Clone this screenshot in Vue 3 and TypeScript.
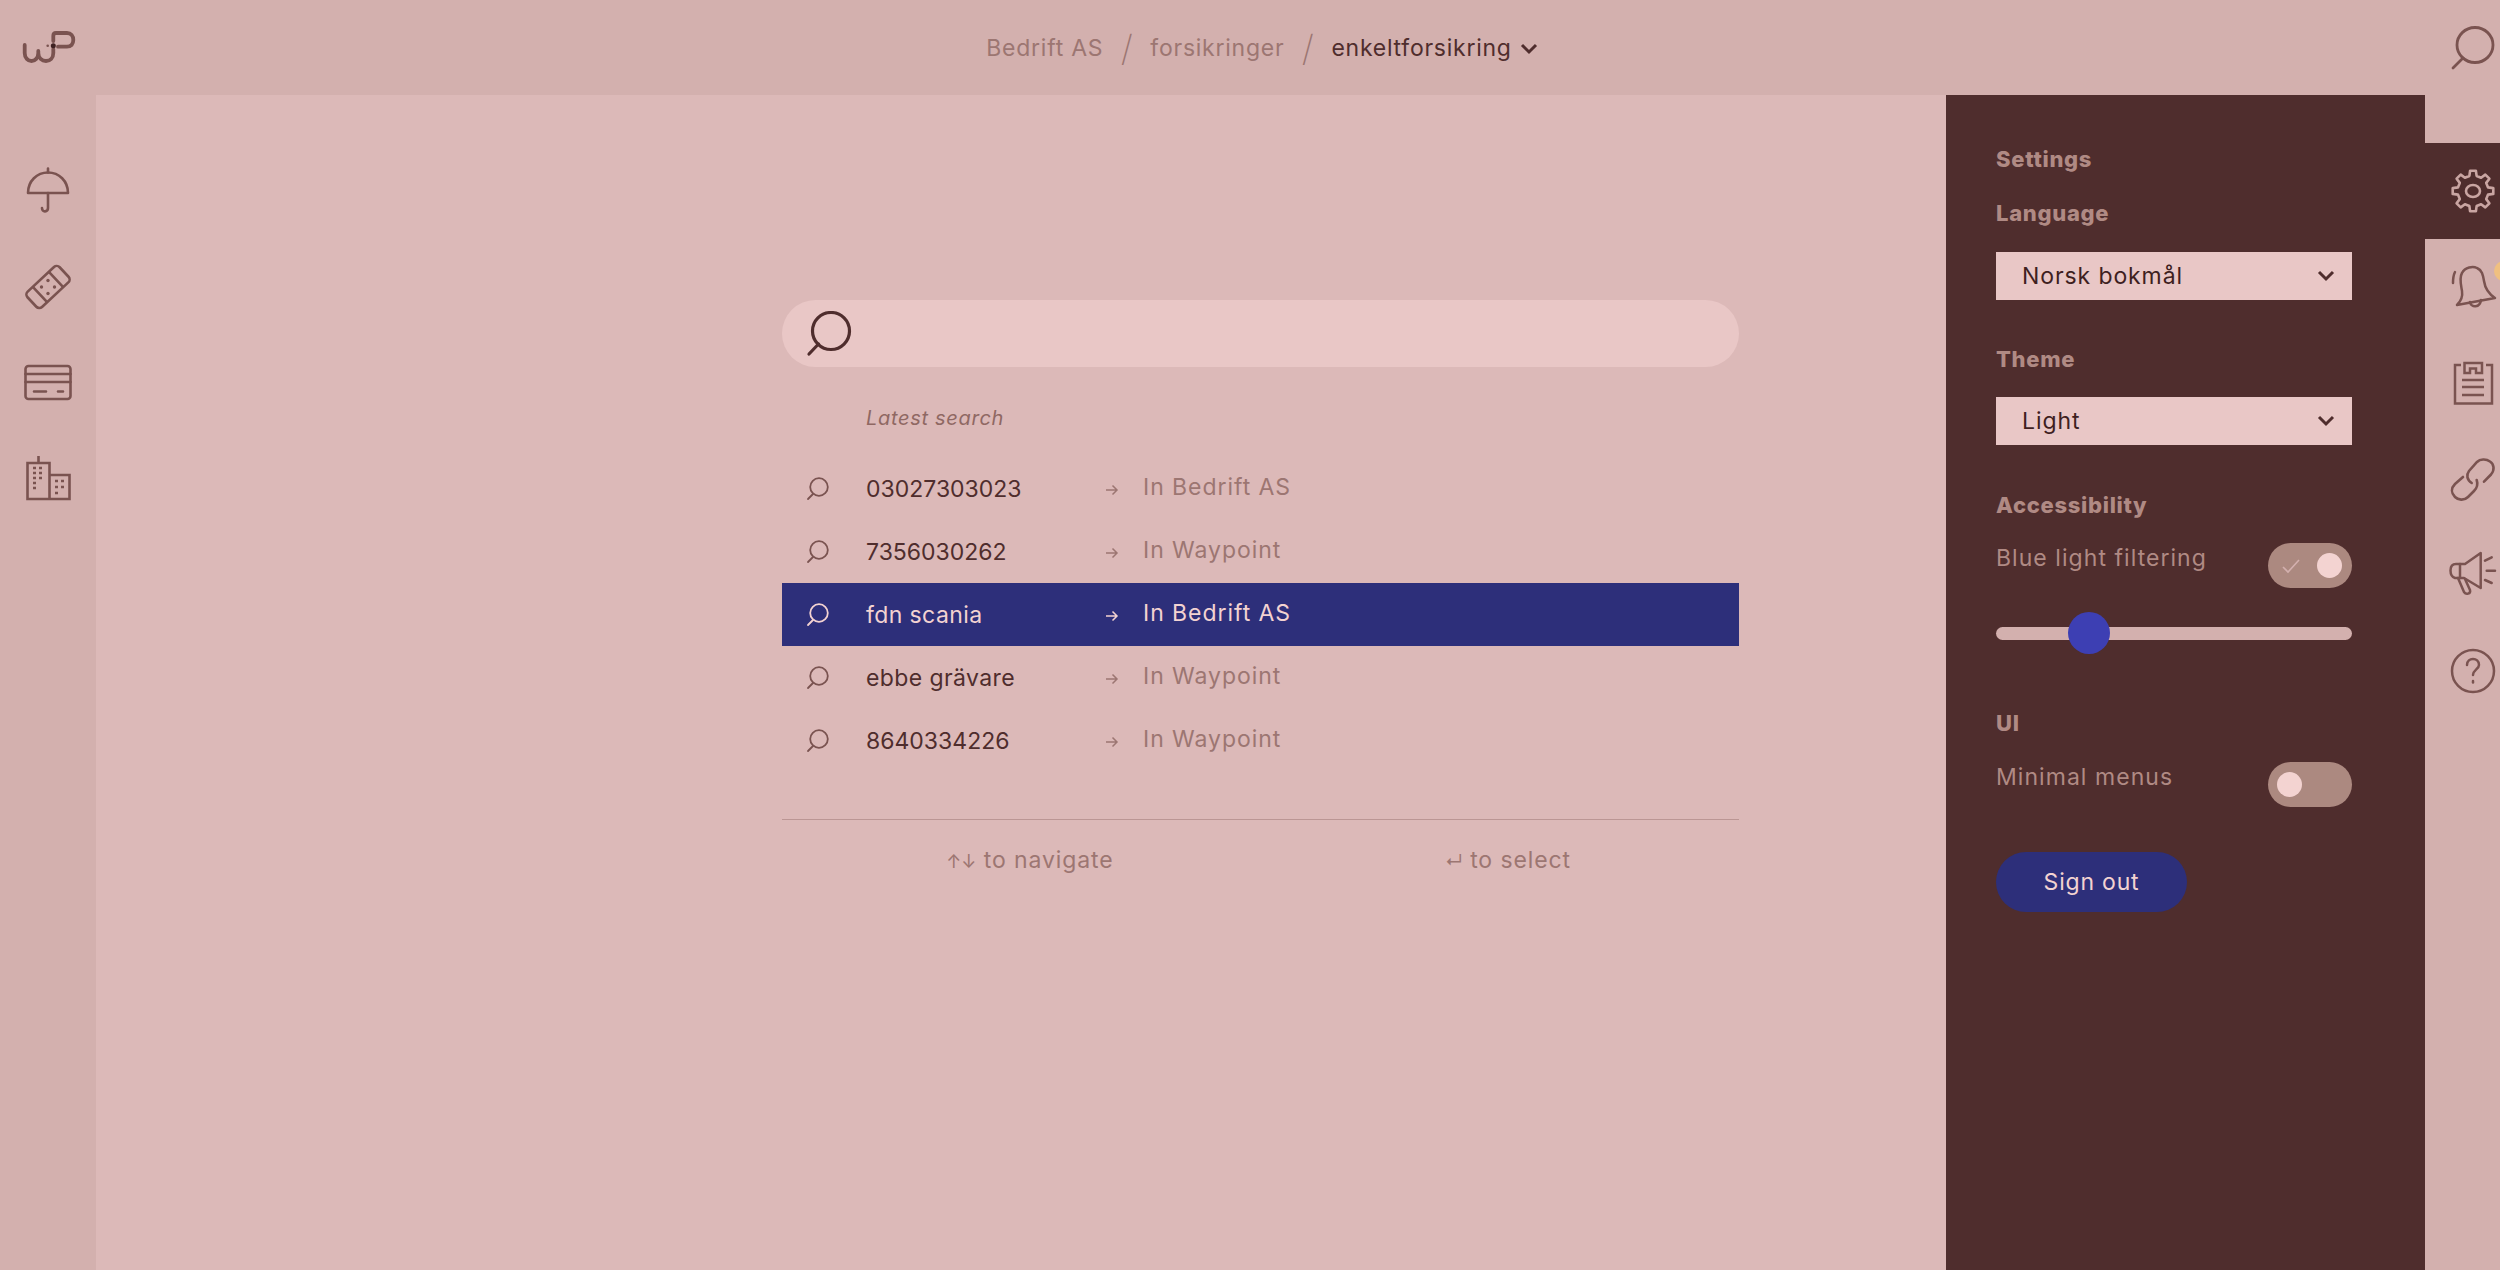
<script setup lang="ts">
interface Row { q: string; where: string; active?: boolean }
const rows: Row[] = [
  { q: '03027303023', where: 'In Bedrift AS' },
  { q: '7356030262', where: 'In Waypoint' },
  { q: 'fdn scania', where: 'In Bedrift AS', active: true },
  { q: 'ebbe grävare', where: 'In Waypoint' },
  { q: '8640334226', where: 'In Waypoint' },
]
const isWord = (s: string): boolean => /[a-z]/i.test(s)

function gearPath(): string {
  const teeth = 8
  const parts: string[] = []
  const cx = 24, cy = 24, ro = 20.5, ri = 15.5
  for (let i = 0; i < teeth; i++) {
    const a = (i / teeth) * Math.PI * 2 - Math.PI / 2
    const s = Math.PI / teeth
    const pts: [number, number][] = [
      [ri, a - s * 0.6],
      [ro, a - s * 0.36],
      [ro, a + s * 0.36],
      [ri, a + s * 0.6],
    ]
    pts.forEach(([r, t]) => {
      const x = (cx + r * Math.cos(t)).toFixed(2)
      const y = (cy + r * Math.sin(t)).toFixed(2)
      parts.push(`${parts.length ? 'L' : 'M'}${x} ${y}`)
    })
  }
  return parts.join(' ') + ' Z'
}
const gear = gearPath()
</script>

<template>
  <div class="app">
    <header class="topbar">
      <div class="logo">
        <svg width="56" height="38" viewBox="0 0 56 38" fill="none" stroke="#7a5350" stroke-width="3.800" stroke-linecap="round">
          <path d="M3.700 17V25C3.700 30 7 33 10.500 33C14 33 17.300 30 17.300 25V23M17.300 25C17.300 30 21 33 25 33C29 33 32.300 30 32.300 25V21" />
          <path d="M32.300 13V8C32.300 6 33.500 5 35 5H46C50 5 52.300 8 52.300 12C52.300 16 50 18.700 46 18.700H37" />
          <circle cx="26.700" cy="17.700" r="1.300" fill="#7a5350" stroke="none" />
          <circle cx="32.300" cy="17.700" r="2.500" fill="#3f2222" stroke="none" />
        </svg>
      </div>
      <nav class="crumbs">
        <span class="crumb">Bedrift AS</span>
        <span class="slash">/</span>
        <span class="crumb">forsikringer</span>
        <span class="slash">/</span>
        <span class="crumb current">enkeltforsikring</span>
        <svg class="crumb-chev" width="18" height="12" viewBox="0 0 18 12" fill="none" stroke="#4f2d2d" stroke-width="3"><path d="M2 2l7 7 7-7" /></svg>
      </nav>
      <div class="top-search">
        <svg width="46" height="46" viewBox="0 0 46 46" fill="none" stroke="#7a5350" stroke-width="2.800" stroke-linecap="round">
          <ellipse cx="25" cy="20" rx="18" ry="17.500" />
          <path d="M13 33L3 43" />
        </svg>
      </div>
    </header>

    <div class="body">
      <aside class="left">
        <div class="side-item">
          <svg width="48" height="48" viewBox="0 0 48 48" fill="none" stroke="#7a5350" stroke-width="2.600" stroke-linecap="round" stroke-linejoin="round">
            <path d="M4 26C4 14 13 5.500 24 5.500S44 14 44 26z" /><path d="M24 1.500v4M24 26v15c0 4-6 5-6 0" />
          </svg>
        </div>
        <div class="side-item">
          <svg width="48" height="48" viewBox="0 0 48 48" fill="none" stroke="#7a5350" stroke-width="2.600">
            <g transform="rotate(-43 24 24)">
              <rect x="2" y="13.500" width="44" height="21" rx="4" />
              <path d="M13 13.500v21M35 13.500v21" />
            </g>
            <g fill="#7a5350" stroke="none">
              <circle cx="24" cy="17.500" r="1.700" /><circle cx="17.500" cy="24" r="1.700" /><circle cx="30.500" cy="24" r="1.700" /><circle cx="24" cy="30.500" r="1.700" />
            </g>
          </svg>
        </div>
        <div class="side-item">
          <svg width="48" height="48" viewBox="0 0 48 48" fill="none" stroke="#7a5350" stroke-width="2.600" stroke-linecap="round">
            <rect x="1.500" y="7" width="45" height="33" rx="3" />
            <path d="M1.500 15h45M1.500 23h45M10 32.500h12M34 32.500h5" />
          </svg>
        </div>
        <div class="side-item">
          <svg width="48" height="48" viewBox="0 0 48 48" fill="none" stroke="#7a5350" stroke-width="2.600">
            <path d="M3.500 44V8h22v36zM25.500 44V20h20v24zM14.500 8V1" />
            <path d="M9 13h3M15 13h3M9 18h3M15 18h3M9 23h3M15 23h3M9 28h3M9 33h3M31 26h3M37 26h3M31 32h3M37 32h3M31 38h3" />
          </svg>
        </div>
      </aside>

      <main class="main">
        <div class="finder">
          <div class="search-box">
            <svg width="46" height="46" viewBox="0 0 46 46" fill="none" stroke="#4f2d2d" stroke-width="3.200" stroke-linecap="round">
              <circle cx="25" cy="20" r="18.500" />
              <path d="M12.500 33L3 43" />
            </svg>
          </div>
          <div class="latest">Latest search</div>
          <ul class="rows">
            <li v-for="r in rows" :key="r.q" class="row" :class="{ active: r.active }">
              <span class="row-icon">
                <svg width="24" height="24" viewBox="0 0 24 24" fill="none" stroke="currentColor" stroke-width="1.800" stroke-linecap="round">
                  <circle cx="13" cy="10" r="8.800" /><path d="M7 17l-5 5" />
                </svg>
              </span>
              <span class="row-q" :class="{ word: isWord(r.q) }">{{ r.q }}</span>
              <span class="row-arrow">
                <svg width="14" height="12" viewBox="0 0 14 12" fill="none" stroke="currentColor" stroke-width="1.500"><path d="M1 6h11M7.500 1.500L12 6l-4.500 4.500" /></svg>
              </span>
              <span class="row-where">{{ r.where }}</span>
            </li>
          </ul>
          <div class="hints">
            <span><small class="keys">↑↓</small> to navigate</span>
            <span><small class="keys">↵</small> to select</span>
          </div>
        </div>

        <section class="panel">
          <div class="p-title">Settings</div>
          <div class="p-head first">Language</div>
          <div class="select">
            <span>Norsk bokmål</span>
            <svg width="18" height="12" viewBox="0 0 18 12" fill="none" stroke="#4f2d2d" stroke-width="3"><path d="M2 2l7 7 7-7" /></svg>
          </div>
          <div class="p-head theme">Theme</div>
          <div class="select tight">
            <span>Light</span>
            <svg width="18" height="12" viewBox="0 0 18 12" fill="none" stroke="#4f2d2d" stroke-width="3"><path d="M2 2l7 7 7-7" /></svg>
          </div>
          <div class="p-head acc">Accessibility</div>
          <div class="p-row">
            <span>Blue light filtering</span>
            <div class="toggle on">
              <svg width="18" height="16" viewBox="0 0 18 16" fill="none" stroke="#d3b0ae" stroke-width="1.600"><path d="M1 9l5 5L17 2" /></svg>
              <i class="knob" />
            </div>
          </div>
          <div class="slider"><div class="track" /><div class="thumb" /></div>
          <div class="p-head ui">UI</div>
          <div class="p-row ui-row">
            <span>Minimal menus</span>
            <div class="toggle"><i class="knob" /></div>
          </div>
          <button class="signout">Sign out</button>
        </section>

        <aside class="rail">
          <div class="rail-item active">
            <svg width="48" height="48" viewBox="0 0 48 48" fill="none" stroke="#c9a5a2" stroke-width="2.600" stroke-linejoin="round">
              <path :d="gear" /><ellipse cx="24" cy="24" rx="7" ry="6" />
            </svg>
          </div>
          <div class="rail-item">
            <svg width="48" height="48" viewBox="0 0 48 48" fill="none" stroke="#7a5350" stroke-width="2.500" stroke-linejoin="round" stroke-linecap="round">
              <path d="M8 42C12 38 14 34 13 28C12 22 10 15 13 10C16 4 24 3 28 5C33 7 34 12 35 18C36 25 40 31 46 35Z" />
              <path d="M21 39C22 45 31 45 32 37" /><path d="M6 9C4 13 4 16 4 20" />
            </svg>
            <i class="dot" />
          </div>
          <div class="rail-item">
            <svg width="48" height="48" viewBox="0 0 48 48" fill="none" stroke="#7a5350" stroke-width="2.500">
              <path d="M12 6H6V44.500H43V6H37" />
              <path d="M15.500 14V4H33V14H27V9.500H21V14Z" />
              <path d="M13 21H35M13 28H35M13 36H35" />
            </svg>
          </div>
          <div class="rail-item">
            <svg width="48" height="48" viewBox="0 0 48 48" fill="none" stroke="#7a5350" stroke-width="2.600" stroke-linecap="round">
              <path d="M35 26.700L42 19.500C46 15 45 9 41 6.500C37 3.500 31 4 28 7L20 16C17 20 18 25 22.700 28" />
              <path d="M27.700 25C29 29 28 33 25 36L19 42C15 46 9 45 6 42C2 38 2 33 6 29L14 22" />
            </svg>
          </div>
          <div class="rail-item">
            <svg width="48" height="48" viewBox="0 0 48 48" fill="none" stroke="#7a5350" stroke-width="2.500" stroke-linejoin="round" stroke-linecap="round">
              <path d="M31.700 2V37L15 27H6C3 26 1.500 23 1.500 19.500C1.500 15 4 13 7 13H16Z" />
              <path d="M9 27L15 41C17 44 22 43 21 39L16 28M11 13V27" />
              <path d="M36 9.700L42.700 6.300M37.700 19.700H46M36 29L42.700 32" />
            </svg>
          </div>
          <div class="rail-item">
            <svg width="48" height="48" viewBox="0 0 48 48" fill="none" stroke="#7a5350" stroke-width="2.500" stroke-linecap="round">
              <circle cx="24" cy="24" r="21" />
              <path d="M18 18c0-4 3-6 6-6s6 2 6 6-6 5-6 10" /><path d="M24 34v1.500" />
            </svg>
          </div>
        </aside>
      </main>
    </div>
  </div>
</template>

<style>
html, body { margin: 0; background: #dcb9b8; }
</style>

<style scoped>
.app {
  width: 2500px;
  height: 1270px;
  overflow: hidden;
  display: flex;
  flex-direction: column;
  background: #d3b0ae;
  font-family: "Inter", "Liberation Sans", sans-serif;
  font-size: 23px;
  color: #4f2d2d;
}
.topbar { height: 95px; flex: none; display: flex; align-items: center; }
.logo { width: 96px; flex: none; display: flex; padding-left: 21px; box-sizing: border-box; margin-top: -1px; }
.crumbs { flex: 1; display: flex; justify-content: center; align-items: center; padding-left: 3px; color: #9c7672; letter-spacing: 0.75px; }
.slash { font-size: 36px; font-weight: 200; margin: 0 17.500px; line-height: 40px; letter-spacing: 0; }
.current { color: #4f2d2d; }
.crumb-chev { margin-left: 8px; margin-top: 2px; }
.top-search { width: 75px; flex: none; display: flex; justify-content: flex-end; padding-right: 4px; box-sizing: border-box; }
.body { flex: 1; display: flex; min-height: 0; }
.left { width: 96px; flex: none; padding-top: 48px; box-sizing: border-box; }
.side-item { height: 96px; display: flex; align-items: center; justify-content: center; }
.main { flex: 1; position: relative; display: flex; background: #dcb9b8; }
.finder { width: 957px; margin-left: 686px; padding-top: 205px; }
.search-box { height: 67px; border-radius: 34px; background: #e9c7c6; display: flex; align-items: center; padding-left: 24px; box-sizing: border-box; }
.latest { margin-top: 36px; height: 30px; line-height: 30px; padding-left: 84px; font-style: italic; font-size: 20px; letter-spacing: 0.7px; color: #8f6863; }
.rows { list-style: none; margin: 24px 0 0; padding: 0; }
.row { height: 63px; display: grid; grid-template-columns: 84px 239px 38px 1fr; align-items: center; color: #4f2d2d; }
.row-icon { display: flex; justify-content: center; color: #7a5350; padding-right: 12px; }
.row-q.word { letter-spacing: 0.4px; }
.row-arrow { display: flex; color: #9c7672; padding-top: 2px; }
.row-where { color: #9c7672; padding-bottom: 3px; letter-spacing: 0.95px; }
.row.active { background: #2d2f7a; color: #f3d3d1; }
.row.active .row-icon, .row.active .row-arrow, .row.active .row-where { color: #f3d3d1; }
.hints {
  margin-top: 47px;
  border-top: 1px solid #bb9694;
  padding: 24px 0 0 128px;
  display: grid;
  grid-template-columns: 240px 240px;
  column-gap: 238px;
  justify-items: center;
  color: #9c7672;
  line-height: 32px;
  letter-spacing: 0.9px;
}
.keys { font-size: 18px; letter-spacing: 0; }
.panel {
  position: absolute;
  top: 0;
  right: 75px;
  bottom: 0;
  width: 479px;
  box-sizing: border-box;
  background: #4f2d2d;
  padding: 50px 73px 0 50px;
  color: #b08a84;
}
.p-title, .p-head { font-weight: 800; line-height: 28px; font-size: 22px; letter-spacing: 0.7px; }
.p-head.first { margin-top: 26px; }
.p-head.theme { margin-top: 45px; }
.p-head.acc { margin-top: 46px; }
.p-head.ui { margin-top: 55px; }
.select {
  margin-top: 25px;
  height: 48px;
  background: #e9c7c6;
  color: #3f1f1f;
  display: flex;
  align-items: center;
  justify-content: space-between;
  padding: 0 17px 0 26px;
  letter-spacing: 0.9px;
}
.select.tight { margin-top: 24px; }
.p-row { margin-top: 24px; display: flex; justify-content: space-between; align-items: flex-start; line-height: 30px; letter-spacing: 1.05px; }
.p-row.ui-row { margin-top: 25px; }
.toggle {
  width: 84px;
  height: 45px;
  border-radius: 23px;
  background: #ac8980;
  display: flex;
  align-items: center;
  padding: 0 9px;
  box-sizing: border-box;
}
.toggle.on { justify-content: space-between; padding: 0 10px 0 14px; }
.knob { width: 25px; height: 25px; border-radius: 50%; background: #f3d3d1; }
.slider { position: relative; margin-top: 24px; height: 42px; display: flex; align-items: center; }
.track { width: 100%; height: 13px; border-radius: 7px; background: #d3b0ae; }
.thumb { position: absolute; left: 72px; top: 0; width: 42px; height: 42px; border-radius: 50%; background: #3d3fb3; }
.signout {
  display: block;
  margin-top: 45px;
  width: 191px;
  height: 60px;
  border: 0;
  border-radius: 30px;
  background: #2d2f7a;
  color: #f3d3d1;
  font: inherit;
  letter-spacing: 0.8px;
}
.rail { position: absolute; top: 0; right: 0; bottom: 0; width: 75px; padding-top: 48px; box-sizing: border-box; background: #d3b0ae; }
.rail-item { position: relative; height: 96px; display: flex; align-items: center; justify-content: flex-end; padding-right: 3px; box-sizing: border-box; overflow: hidden; }
.rail-item.active { background: #4f2d2d; }
.dot { position: absolute; right: -14px; top: 22px; width: 20px; height: 20px; border-radius: 50%; background: #f0c080; }
</style>
